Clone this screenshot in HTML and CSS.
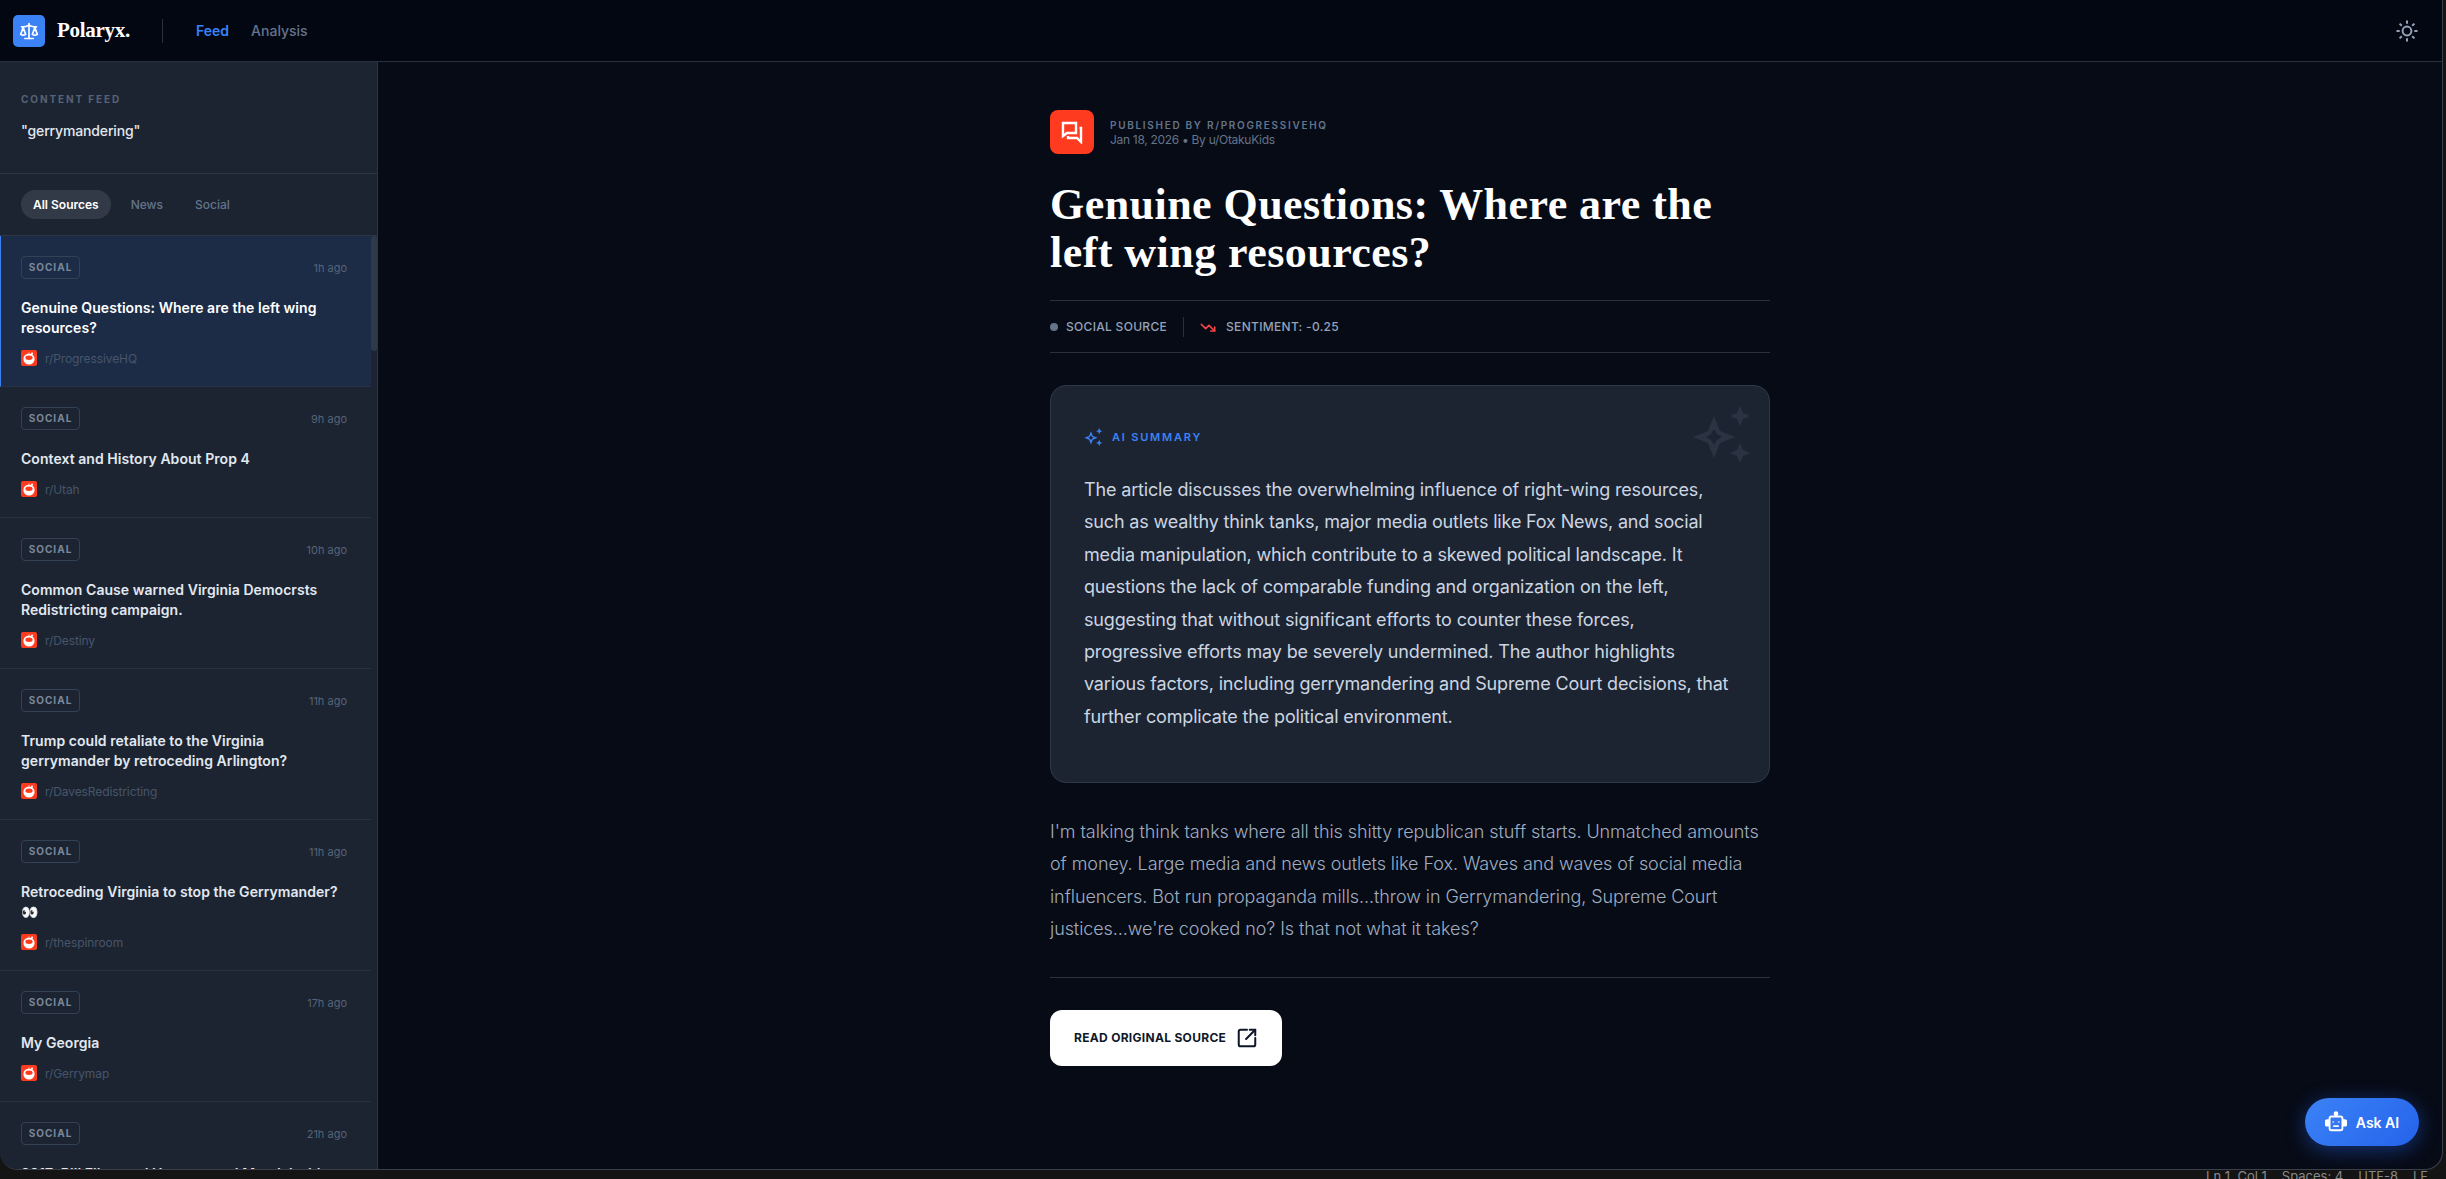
FILE: index.html
```html
<!DOCTYPE html>
<html>
  <head>
    <meta charset="utf-8">
    <title>Polaryx</title>
    <link rel="stylesheet" href="styles.css">
  </head>
  <body>
    <!-- shared icons -->
    <svg class="sprite" aria-hidden="true">
      <symbol id="reddit" viewBox="0 0 16 16">
        <rect width="16" height="16" rx="2" fill="#ff3b1f"/>
        <circle cx="8" cy="9" r="5.6" fill="#fff"/>
        <ellipse cx="8" cy="7.8" rx="3.6" ry="2.2" fill="#ff3b1f"/>
        <circle cx="11" cy="3.6" r="1.1" fill="#fff"/>
        <path d="M8 3.4 8 2.6" stroke="#fff"/>
      </symbol>
      <symbol id="sparkle" viewBox="0 0 60 60">
        <path d="M22 10 28 25 43 31 28 37 22 52 16 37 1 31 16 25Z M22 23 19 28 14 31 19 34 22 39 25 34 30 31 25 28Z" fill-rule="evenodd"/>
        <path d="M48 0 51 7 58 10 51 13 48 20 45 13 38 10 45 7Z"/>
        <path d="M48 37 51 44 58 47 51 50 48 57 45 50 38 47 45 44Z"/>
      </symbol>
    </svg>

    <div class="window">
      <header class="topbar">
        <div class="logo">
          <svg viewBox="0 0 24 24" width="20" height="20" fill="none" stroke="#fff" stroke-width="2" stroke-linecap="round" stroke-linejoin="round">
            <path d="m16 16 3-8 3 8c-.87.65-1.92 1-3 1s-2.13-.35-3-1Z"/>
            <path d="m2 16 3-8 3 8c-.87.65-1.92 1-3 1s-2.13-.35-3-1Z"/>
            <path d="M7 21h10"/>
            <path d="M12 3v18"/>
            <path d="M3 7h2c2 0 5-1 7-2 2 1 5 2 7 2h2"/>
          </svg>
        </div>
        <span class="brand">Polaryx.</span>
        <span class="topbar-sep"></span>
        <nav class="nav">
          <a class="nav-link active">Feed</a>
          <a class="nav-link">Analysis</a>
        </nav>
        <svg class="sun" viewBox="0 0 24 24" width="24" height="24" fill="none" stroke="#94a3b8" stroke-width="2">
          <circle cx="12" cy="12" r="4.4"/>
          <path d="M12 1.5v3.2M12 19.3v3.2M1.5 12h3.2M19.3 12h3.2M4.6 4.6l2.2 2.2M17.2 17.2l2.2 2.2M4.6 19.4l2.2-2.2M17.2 6.8l2.2-2.2"/>
        </svg>
      </header>

      <div class="columns">
        <aside class="sidebar">
          <div class="side-head">
            <div class="side-label">CONTENT FEED</div>
            <div class="side-query">"gerrymandering"</div>
          </div>
          <div class="filters">
            <span class="filter active">All Sources</span>
            <span class="filter">News</span>
            <span class="filter">Social</span>
          </div>
          <div class="feed">
            <div class="feed-list">
              <div class="item selected">
                <div class="item-top"><span class="badge">SOCIAL</span><span class="time">1h ago</span></div>
                <div class="item-title">Genuine Questions: Where are the left wing resources?</div>
                <div class="item-source"><svg width="16" height="16"><use href="#reddit"/></svg>r/ProgressiveHQ</div>
              </div>
              <div class="item">
                <div class="item-top"><span class="badge">SOCIAL</span><span class="time">9h ago</span></div>
                <div class="item-title">Context and History About Prop 4</div>
                <div class="item-source"><svg width="16" height="16"><use href="#reddit"/></svg>r/Utah</div>
              </div>
              <div class="item">
                <div class="item-top"><span class="badge">SOCIAL</span><span class="time">10h ago</span></div>
                <div class="item-title">Common Cause warned Virginia Democrsts Redistricting campaign.</div>
                <div class="item-source"><svg width="16" height="16"><use href="#reddit"/></svg>r/Destiny</div>
              </div>
              <div class="item">
                <div class="item-top"><span class="badge">SOCIAL</span><span class="time">11h ago</span></div>
                <div class="item-title">Trump could retaliate to the Virginia gerrymander by retroceding Arlington?</div>
                <div class="item-source"><svg width="16" height="16"><use href="#reddit"/></svg>r/DavesRedistricting</div>
              </div>
              <div class="item">
                <div class="item-top"><span class="badge">SOCIAL</span><span class="time">11h ago</span></div>
                <div class="item-title">Retroceding Virginia to stop the Gerrymander? 👀</div>
                <div class="item-source"><svg width="16" height="16"><use href="#reddit"/></svg>r/thespinroom</div>
              </div>
              <div class="item">
                <div class="item-top"><span class="badge">SOCIAL</span><span class="time">17h ago</span></div>
                <div class="item-title">My Georgia</div>
                <div class="item-source"><svg width="16" height="16"><use href="#reddit"/></svg>r/Gerrymap</div>
              </div>
              <div class="item">
                <div class="item-top"><span class="badge">SOCIAL</span><span class="time">21h ago</span></div>
                <div class="item-title">2017: Bill Filter and Hanover and Mandel with</div>
              </div>
            </div>
            <div class="scrollbar"><div class="scroll-thumb"></div></div>
          </div>
        </aside>

        <main class="main">
          <article class="article">
            <div class="author">
              <div class="author-icon">
                <svg viewBox="0 0 24 24" width="24" height="24" fill="none" stroke="#fff" stroke-width="2.400" stroke-linejoin="miter">
                  <path d="M3 3h13v10H7l-4 3z"/>
                  <path d="M19.500 8H21v14l-4-4H8v-2"/>
                </svg>
              </div>
              <div class="author-info">
                <div class="author-by">PUBLISHED BY R/PROGRESSIVEHQ</div>
                <div class="author-date">Jan 18, 2026 • By u/OtakuKids</div>
              </div>
            </div>

            <h1 class="title">Genuine Questions: Where are the left wing resources?</h1>

            <div class="meta">
              <span class="meta-dot"></span>
              <span class="meta-text">SOCIAL SOURCE</span>
              <span class="meta-sep"></span>
              <svg viewBox="0 0 24 24" width="16" height="16" fill="none" stroke="#ef4444" stroke-width="2.500" stroke-linecap="round" stroke-linejoin="round">
                <path d="M22 18 13.500 9.500 8.500 14.500 2 8"/>
                <path d="M16 18h6v-6"/>
              </svg>
              <span class="meta-text">SENTIMENT: -0.25</span>
            </div>

            <section class="summary">
              <svg class="summary-ghost"><use href="#sparkle"/></svg>
              <div class="summary-label">
                <svg width="19" height="19"><use href="#sparkle"/></svg>
                AI SUMMARY
              </div>
              <p class="summary-text">The article discusses the overwhelming influence of right-wing resources, such as wealthy think tanks, major media outlets like Fox News, and social media manipulation, which contribute to a skewed political landscape. It questions the lack of comparable funding and organization on the left, suggesting that without significant efforts to counter these forces, progressive efforts may be severely undermined. The author highlights various factors, including gerrymandering and Supreme Court decisions, that further complicate the political environment.</p>
            </section>

            <p class="body-text">I'm talking think tanks where all this shitty republican stuff starts. Unmatched amounts of money. Large media and news outlets like Fox. Waves and waves of social media influencers. Bot run propaganda mills...throw in Gerrymandering, Supreme Court justices...we're cooked no? Is that not what it takes?</p>

            <div class="article-foot">
              <a class="read-btn">
                READ ORIGINAL SOURCE
                <svg viewBox="0 0 24 24" width="22" height="22" fill="none" stroke="#0f172a" stroke-width="2.200" stroke-linecap="round" stroke-linejoin="round">
                  <path d="M12 3H5a2 2 0 0 0-2 2v14a2 2 0 0 0 2 2h14a2 2 0 0 0 2-2v-7"/>
                  <path d="M11 13 21 3"/>
                  <path d="M15 3h6v6"/>
                </svg>
              </a>
            </div>
          </article>

          <!-- floating chat button -->
          <button class="ask-ai">
            <svg viewBox="0 0 24 24" width="22" height="22" fill="none" stroke="#fff" stroke-width="2" stroke-linejoin="round">
              <rect x="5" y="6" width="14" height="15" rx="2"/>
              <circle cx="12" cy="3" r="1.600" fill="#fff"/>
              <path d="M5 10H3a2 2 0 0 0 0 6h2M19 10h2a2 2 0 0 1 0 6h-2" fill="#fff"/>
              <path d="M9 11.500v1M15 11.500v1M9 16.500h6"/>
            </svg>
            Ask AI
          </button>
        </main>
      </div>
    </div>

    <footer class="statusbar">
      <span>Ln 1, Col 1</span>
      <span>Spaces: 4</span>
      <span>UTF-8</span>
      <span>LF</span>
    </footer>
  </body>
</html>
```

FILE: styles.css
```css
html, body {
  margin: 0;
  height: 100%;
}
body {
  background: #141414;
  font-family: Inter, "Noto Sans", sans-serif;
  overflow: hidden;
}
.sprite {
  display: none;
}
.window {
  width: 2443px;
  height: 1170px;
  box-sizing: border-box;
  display: flex;
  flex-direction: column;
  background: #070b16;
  border-right: 1px solid #3b3f4a;
  border-bottom: 1px solid #3b3f4a;
  border-radius: 0 0 18px 18px;
  overflow: hidden;
}

/* top bar */
.topbar {
  height: 62px;
  box-sizing: border-box;
  flex: none;
  display: flex;
  align-items: center;
  padding: 0 23px 0 13px;
  background: #030712;
  border-bottom: 1px solid #2a303d;
}
.logo {
  width: 32px;
  height: 32px;
  border-radius: 5px;
  background: #3b82f6;
  display: flex;
  align-items: center;
  justify-content: center;
}
.brand {
  margin-left: 12px;
  font-family: "Liberation Serif", serif;
  font-weight: 700;
  font-size: 21px;
  letter-spacing: -0.3px;
  color: #fff;
  width: 105px;
}
.topbar-sep {
  width: 1px;
  height: 24px;
  background: #2a303d;
}
.nav {
  display: flex;
  gap: 22px;
  margin-left: 33px;
  font-size: 14px;
}
.nav-link {
  color: #64748b;
  font-weight: 500;
}
.nav-link.active {
  color: #3b82f6;
  font-weight: 600;
}
.sun {
  margin-left: auto;
}

.columns {
  flex: 1;
  display: flex;
  min-height: 0;
}

/* sidebar */
.sidebar {
  width: 378px;
  box-sizing: border-box;
  flex: none;
  display: flex;
  flex-direction: column;
  background: #1c2432;
  border-right: 1px solid #2c3546;
}
.side-head {
  height: 112px;
  box-sizing: border-box;
  flex: none;
  padding: 30px 21px 0;
  border-bottom: 1px solid #2c3546;
}
.side-label {
  font-size: 10px;
  line-height: 14px;
  font-weight: 700;
  letter-spacing: 1.900px;
  color: #566376;
}
.side-query {
  margin-top: 15px;
  font-size: 14px;
  line-height: 20px;
  font-weight: 500;
  letter-spacing: -0.15px;
  color: #e2e8f0;
}
.filters {
  height: 62px;
  box-sizing: border-box;
  flex: none;
  display: flex;
  align-items: center;
  gap: 8px;
  padding: 0 21px 1px;
  border-bottom: 1px solid #2c3546;
}
.filter {
  padding: 0 12px;
  height: 29px;
  line-height: 29px;
  border-radius: 15px;
  font-size: 12px;
  font-weight: 500;
  color: #64748b;
}
.filter.active {
  background: #333a47;
  color: #fff;
  font-weight: 600;
}
.feed {
  flex: 1;
  display: flex;
  min-height: 0;
  overflow: hidden;
}
.feed-list {
  flex: 1;
  min-width: 0;
}
.scrollbar {
  width: 6px;
  flex: none;
}
.scroll-thumb {
  height: 115px;
  background: #2f3949;
  border-radius: 3px;
}
.item {
  padding: 20px 24px 20px 21px;
  border-bottom: 1px solid #283142;
}
.item.selected {
  background: #1c2c47;
  padding-left: 20px;
  border-left: 1px solid #3b82f6;
}
.item-top {
  display: flex;
  justify-content: space-between;
  align-items: center;
}
.badge {
  box-sizing: border-box;
  width: 59px;
  height: 23px;
  line-height: 21px;
  text-align: center;
  border: 1px solid #334155;
  border-radius: 4px;
  font-size: 10px;
  font-weight: 700;
  letter-spacing: 1px;
  color: #7b889a;
}
.time {
  font-size: 11px;
  color: #566376;
}
.item-title {
  margin-top: 19px;
  font-size: 14px;
  line-height: 20px;
  font-weight: 600;
  letter-spacing: 0.05px;
  color: #e2e8f0;
}
.selected .item-title {
  color: #fff;
}
.item-source {
  display: flex;
  align-items: center;
  gap: 8px;
  margin-top: 12px;
  height: 16px;
  font-size: 12px;
  letter-spacing: -0.1px;
  color: #475569;
}

/* article */
.main {
  flex: 1;
  position: relative;
  display: flex;
  justify-content: center;
  min-width: 0;
}
.article {
  width: 720px;
  padding-top: 48px;
}
.author {
  display: flex;
  align-items: center;
  gap: 16px;
}
.author-icon {
  width: 44px;
  height: 44px;
  border-radius: 8px;
  background: #ff3b1f;
  display: flex;
  align-items: center;
  justify-content: center;
}
.author-info {
  padding-top: 2px;
}
.author-by {
  font-size: 10px;
  line-height: 14px;
  font-weight: 600;
  letter-spacing: 1.700px;
  color: #64748b;
}
.author-date {
  font-size: 12px;
  line-height: 16px;
  letter-spacing: -0.3px;
  color: #64748b;
}
.title {
  margin: 27px 0 23px;
  font-family: "Liberation Serif", serif;
  font-size: 44px;
  line-height: 48px;
  font-weight: 700;
  letter-spacing: 0.45px;
  color: #fff;
}
.meta {
  height: 53px;
  box-sizing: border-box;
  display: flex;
  align-items: center;
  border-top: 1px solid #2a303d;
  border-bottom: 1px solid #2a303d;
}
.meta-dot {
  width: 8px;
  height: 8px;
  border-radius: 50%;
  background: #64748b;
  margin-right: 8px;
}
.meta-text {
  font-size: 12px;
  font-weight: 500;
  letter-spacing: 0.3px;
  color: #94a3b8;
}
.meta-sep {
  width: 1px;
  height: 20px;
  background: #2a303d;
  margin: 0 16px;
}
.meta svg {
  margin-right: 10px;
}
.summary {
  position: relative;
  height: 398px;
  box-sizing: border-box;
  margin-top: 32px;
  padding: 39px 33px 0;
  background: #1c2432;
  border: 1px solid #2f394a;
  border-radius: 16px;
}
.summary-ghost {
  position: absolute;
  top: 20px;
  right: 17px;
  width: 60px;
  height: 60px;
  fill: #94a3b8;
  opacity: 0.12;
}
.summary-label {
  display: flex;
  align-items: center;
  gap: 9px;
  height: 24px;
  font-size: 11px;
  font-weight: 600;
  letter-spacing: 1.800px;
  color: #3b82f6;
  fill: #3b82f6;
}
.summary-text {
  margin: 25px 0 0;
  font-size: 18px;
  line-height: 32.400px;
  letter-spacing: -0.16px;
  color: #cbd5e1;
}
.body-text {
  margin: 33px 0 31px;
  font-size: 18px;
  line-height: 32.400px;
  font-weight: 300;
  letter-spacing: -0.08px;
  color: #a0adc0;
}
.article-foot {
  border-top: 1px solid #2a303d;
  padding-top: 32px;
}
.read-btn {
  display: inline-flex;
  align-items: center;
  gap: 10px;
  height: 56px;
  padding: 0 24px;
  background: #fff;
  border-radius: 12px;
  font-size: 12px;
  font-weight: 700;
  letter-spacing: 0.3px;
  color: #0f172a;
}
.ask-ai {
  position: absolute;
  right: 23px;
  bottom: 23px;
  width: 114px;
  height: 48px;
  border: 0;
  border-radius: 24px;
  display: flex;
  align-items: center;
  justify-content: center;
  gap: 9px;
  font-family: inherit;
  font-size: 14px;
  font-weight: 600;
  color: #fff;
  background: linear-gradient(135deg, #3b82f6, #2563eb);
  box-shadow: 0 4px 20px rgba(37, 99, 235, 0.45);
}

/* editor status strip under the window */
.statusbar {
  height: 9px;
  display: flex;
  justify-content: flex-end;
  gap: 15px;
  padding-right: 18px;
  font-size: 13px;
  line-height: 12px;
  color: #8a8a8a;
  overflow: hidden;
}
```
